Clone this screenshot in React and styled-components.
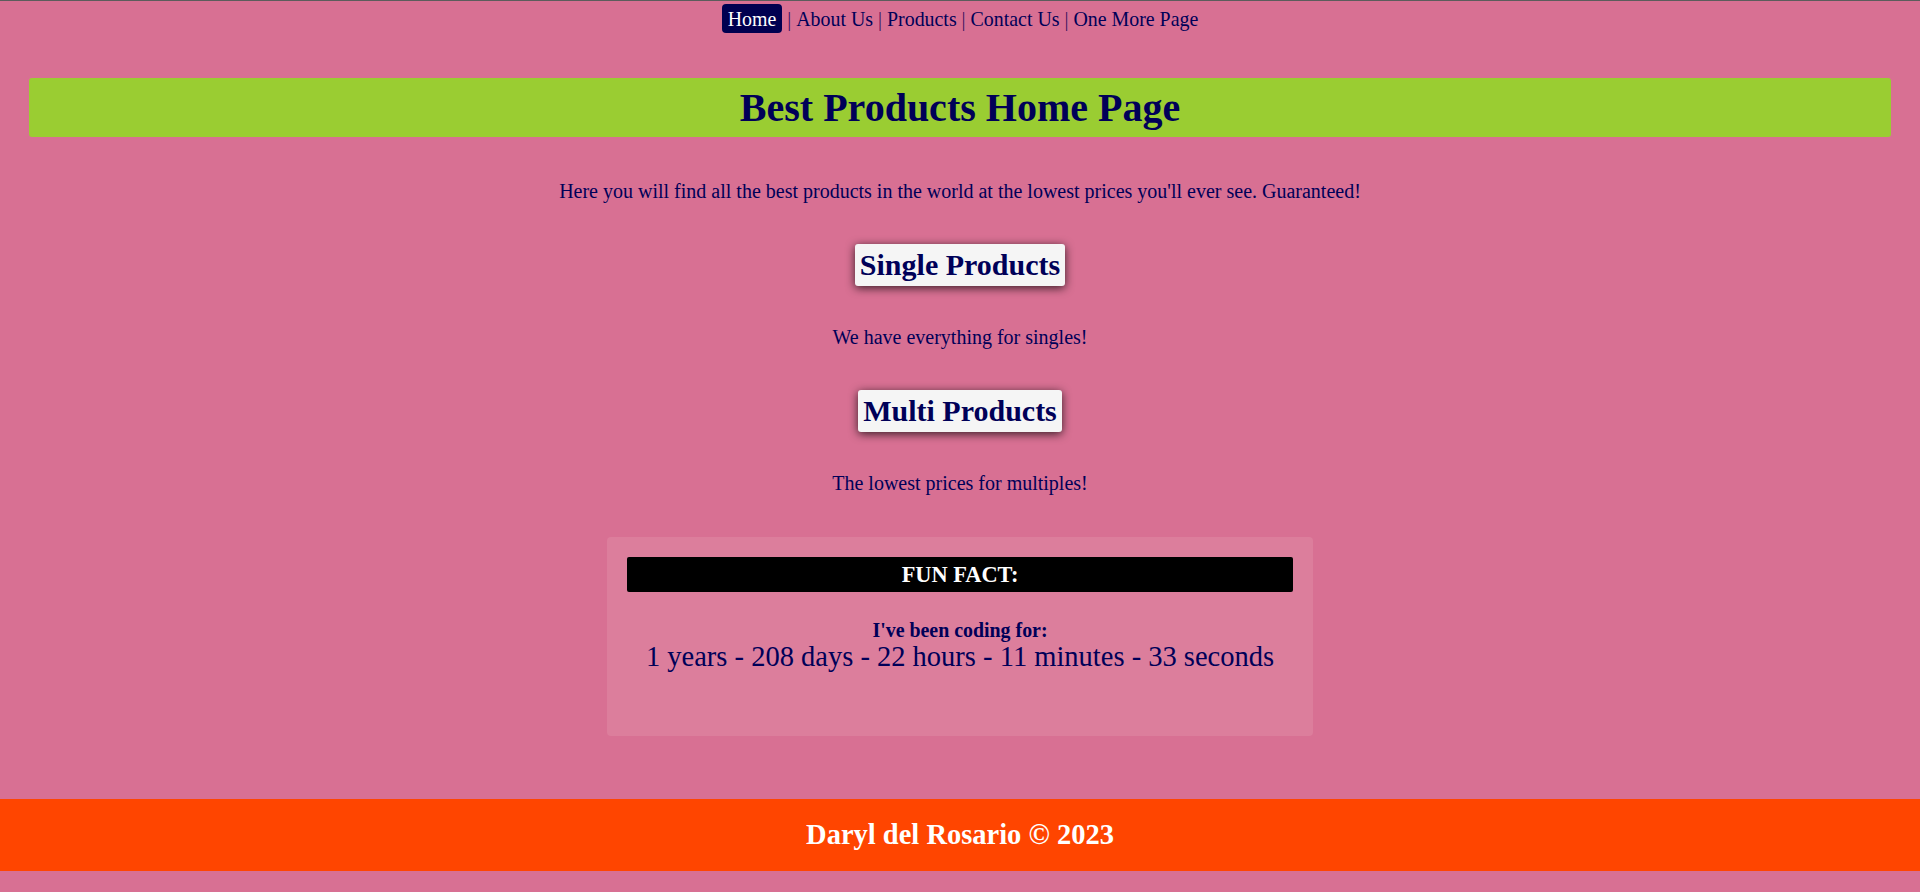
import React from "react";
import styled, { createGlobalStyle } from "styled-components";

const Global = createGlobalStyle`
  html, body {
    margin: 0;
    padding: 0;
    background: #d87093;
  }
  body {
    border-top: 1px solid #5c5c5c;
    font-family: "Liberation Serif", "Times New Roman", serif;
    color: #000058;
  }
`;

const Page = styled.div`
  display: flex;
  flex-direction: column;
  align-items: stretch;
`;

const Nav = styled.nav`
  display: flex;
  justify-content: center;
  align-items: center;
  padding-top: 3px;
  font-size: 19.9px;
  line-height: 22px;
  color: #000058;
  white-space: pre;
`;

const NavLink = styled.a`
  color: #000058;
  text-decoration: none;
  ${({ $active }) =>
    $active &&
    `
    background: #000050;
    color: #ffffff;
    border-radius: 4px;
    padding: 4px 6px 3px;
  `}
`;

const Sep = styled.span`
  color: #3a1060;
`;

const Main = styled.main`
  display: flex;
  flex-direction: column;
  align-items: center;
  padding: 0 29px;
`;

const Banner = styled.h1`
  align-self: stretch;
  margin: 45px 0 0;
  background: #9acd32;
  border-radius: 3px;
  text-align: center;
  font-size: 40px;
  font-weight: bold;
  line-height: 44px;
  padding: 8px 0 7px;
  color: #000058;
`;

const Text = styled.p`
  margin: ${({ $top }) => $top}px 0 0;
  font-size: 20px;
  line-height: 22px;
  text-align: center;
`;

const Sub = styled.h2`
  margin: 42px 0 0;
  background: #f5f5f5;
  border-radius: 3px;
  box-shadow: 0 2px 10px rgba(0, 0, 0, 0.75);
  font-size: 30px;
  font-weight: bold;
  line-height: 34px;
  padding: 4px 5px;
  color: #000058;
`;

const FactBox = styled.section`
  width: 706px;
  box-sizing: border-box;
  margin-top: 43px;
  background: #dc7e9c;
  border-radius: 4px;
  padding: 20px 20px 63px;
  display: flex;
  flex-direction: column;
  align-items: stretch;
  text-align: center;
`;

const FactTitle = styled.h3`
  margin: 0;
  background: #000000;
  color: #ffffff;
  border-radius: 2px;
  font-size: 22.4px;
  font-weight: bold;
  line-height: 26px;
  padding: 5px 0 4px;
`;

const FactLabel = styled.div`
  margin-top: 27px;
  font-size: 19.9px;
  line-height: 22px;
  font-weight: bold;
  color: #000058;
`;

const Timer = styled.div`
  font-size: 28.5px;
  color: #000058;
`;

const Footer = styled.footer`
  margin-top: 63px;
  background: #ff4500;
  height: 72px;
  display: flex;
  align-items: center;
  justify-content: center;
  color: #ffffff;
  font-size: 28.5px;
  font-weight: bold;
`;

const links = ["About Us", "Products", "Contact Us", "One More Page"];

export default function App() {
  return (
    <Page>
      <Global />
      <Nav>
        <NavLink $active href="#">Home</NavLink>
        {links.map((l) => (
          <React.Fragment key={l}>
            <Sep> | </Sep>
            <NavLink href="#">{l}</NavLink>
          </React.Fragment>
        ))}
      </Nav>
      <Main>
        <Banner>Best Products Home Page</Banner>
        <Text $top={43}>
          Here you will find all the best products in the world at the lowest prices you'll ever see. Guaranteed!
        </Text>
        <Sub>Single Products</Sub>
        <Text $top={40}>We have everything for singles!</Text>
        <Sub>Multi Products</Sub>
        <Text $top={40}>The lowest prices for multiples!</Text>
        <FactBox>
          <FactTitle>FUN FACT:</FactTitle>
          <FactLabel>I've been coding for:</FactLabel>
          <Timer>1 years - 208 days - 22 hours - 11 minutes - 33 seconds</Timer>
        </FactBox>
      </Main>
      <Footer>Daryl del Rosario © 2023</Footer>
    </Page>
  );
}
